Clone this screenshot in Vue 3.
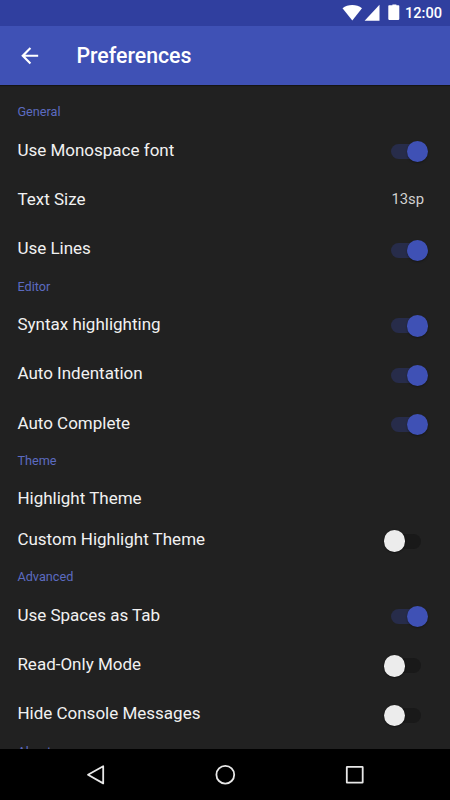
<template>
  <div class="screen">
    <div class="status-bar">
      <svg class="status-icons" width="58" height="26" viewBox="0 0 58 26" fill="#fff">
        <path d="M0.5 8.2C5.8 4 14.7 4 20 8.2L10.3 20.4Z" />
        <path d="M37.5 4.8V20.8H22.6Z" />
        <path d="M48.3 5.2h2.1V4.6h4v.6h2.1q.8 0 .8.8v13.1q0 .8-.8.8h-9.4q-.8 0-.8-.8V6q0-.8.8-.8z" />
      </svg>
      <span class="clock">12:00</span>
    </div>

    <header class="toolbar">
      <button class="back-btn" aria-label="Back">
        <svg width="25.4" height="25.4" viewBox="0 0 24 24" fill="#fff">
          <path d="M20 11H7.83l5.59-5.59L12 4l-8 8 8 8 1.41-1.41L7.83 13H20v-2z" />
        </svg>
      </button>
      <h1 class="title">Preferences</h1>
    </header>

    <main class="list">
      <section v-for="group in groups" :key="group.name">
        <h2 class="group-title"><span>{{ group.name }}</span></h2>
        <div v-for="item in group.items" :key="item.label" class="row" :class="{ plain: isPlain(item) }" @click="toggle(item)">
          <span class="label">{{ item.label }}</span>
          <span v-if="item.value" class="value">{{ item.value }}</span>
          <span v-else-if="!isPlain(item)" class="switch" :class="{ on: item.on }"><i class="thumb"></i></span>
        </div>
      </section>
    </main>

    <nav class="nav-bar">
      <svg width="22" height="22" viewBox="0 0 22 22"><path d="M19.2 2.2V19.4L4 10.8Z" /></svg>
      <svg width="22" height="22" viewBox="0 0 22 22"><circle cx="11.3" cy="10.7" r="8.9" /></svg>
      <svg width="22" height="22" viewBox="0 0 22 22"><rect x="2.8" y="2.8" width="15.9" height="15.9" rx="0.4" /></svg>
    </nav>
  </div>
</template>

<script setup>
import { ref } from 'vue'

const groups = ref([
  {
    name: 'General',
    items: [
      { label: 'Use Monospace font', on: true },
      { label: 'Text Size', value: '13sp' },
      { label: 'Use Lines', on: true },
    ],
  },
  {
    name: 'Editor',
    items: [
      { label: 'Syntax highlighting', on: true },
      { label: 'Auto Indentation', on: true },
      { label: 'Auto Complete', on: true },
    ],
  },
  {
    name: 'Theme',
    items: [
      { label: 'Highlight Theme' },
      { label: 'Custom Highlight Theme', on: false },
    ],
  },
  {
    name: 'Advanced',
    items: [
      { label: 'Use Spaces as Tab', on: true },
      { label: 'Read-Only Mode', on: false },
      { label: 'Hide Console Messages', on: false },
    ],
  },
  { name: 'About', items: [] },
])

function isPlain(item) {
  return item.on === undefined && !item.value
}
function toggle(item) {
  if (item.on !== undefined) item.on = !item.on
}
</script>

<style>
body { background: #212121; }
</style>

<style scoped>
.screen { display: flex; flex-direction: column; width: 450px; height: 800px; overflow: hidden; background: #212121; color: #f1f1f1; font-family: Roboto, sans-serif; }
.status-bar { display: flex; flex: none; justify-content: flex-end; height: 25.6px; padding-right: 8px; background: #303f9f; }
.status-icons { flex: none; }
.clock { width: 37px; margin-left: 5px; font-size: 14.6px; font-weight: 500; line-height: 27px; color: #fff; text-align: right; white-space: nowrap; }
.toolbar { display: flex; flex: none; align-items: center; height: 59.4px; padding-left: 17px; background: #3f51b5; box-shadow: 0 1px 1px rgba(0, 0, 0, 0.35); z-index: 1; }
.back-btn { display: flex; padding: 0; border: 0; background: none; cursor: pointer; }
.title { margin: 1px 0 0 34px; font-size: 21.3px; font-weight: 500; line-height: 28px; color: #fff; }
.list { flex: 1; min-height: 0; padding-top: 13.8px; overflow: hidden; }
.group-title { display: flex; align-items: center; height: 26.1px; margin: 0; padding-left: 17.4px; font-size: 12.7px; font-weight: 400; color: #5c6bc0; }
.row { display: flex; align-items: center; justify-content: space-between; box-sizing: border-box; height: 49.4px; padding: 0 29px 0 17.4px; }
.row.plain { height: 41px; padding-top: 8px; }
.label { font-size: 17px; line-height: 22px; }
.value { margin-right: -3px; font-size: 14.8px; color: #d0d0d0; }
.switch { position: relative; width: 30px; height: 15px; margin-top: 4px; border-radius: 8px; background: #191919; }
.thumb { position: absolute; left: -7px; top: -3.2px; width: 21.4px; height: 21.4px; border-radius: 50%; background: #ececec; box-shadow: 0 0.5px 1.5px rgba(0, 0, 0, 0.8); }
.switch.on { background: #272c4a; }
.switch.on .thumb { left: 15.7px; background: #3f51b5; box-shadow: 0 1px 2px rgba(0, 0, 0, 0.35); }
.nav-bar { display: flex; flex: none; align-items: center; justify-content: space-between; height: 51px; padding: 0 84px; box-sizing: border-box; background: #000; }
.nav-bar svg { fill: none; stroke: #e8e8e8; stroke-width: 1.8; stroke-linejoin: round; }
</style>
